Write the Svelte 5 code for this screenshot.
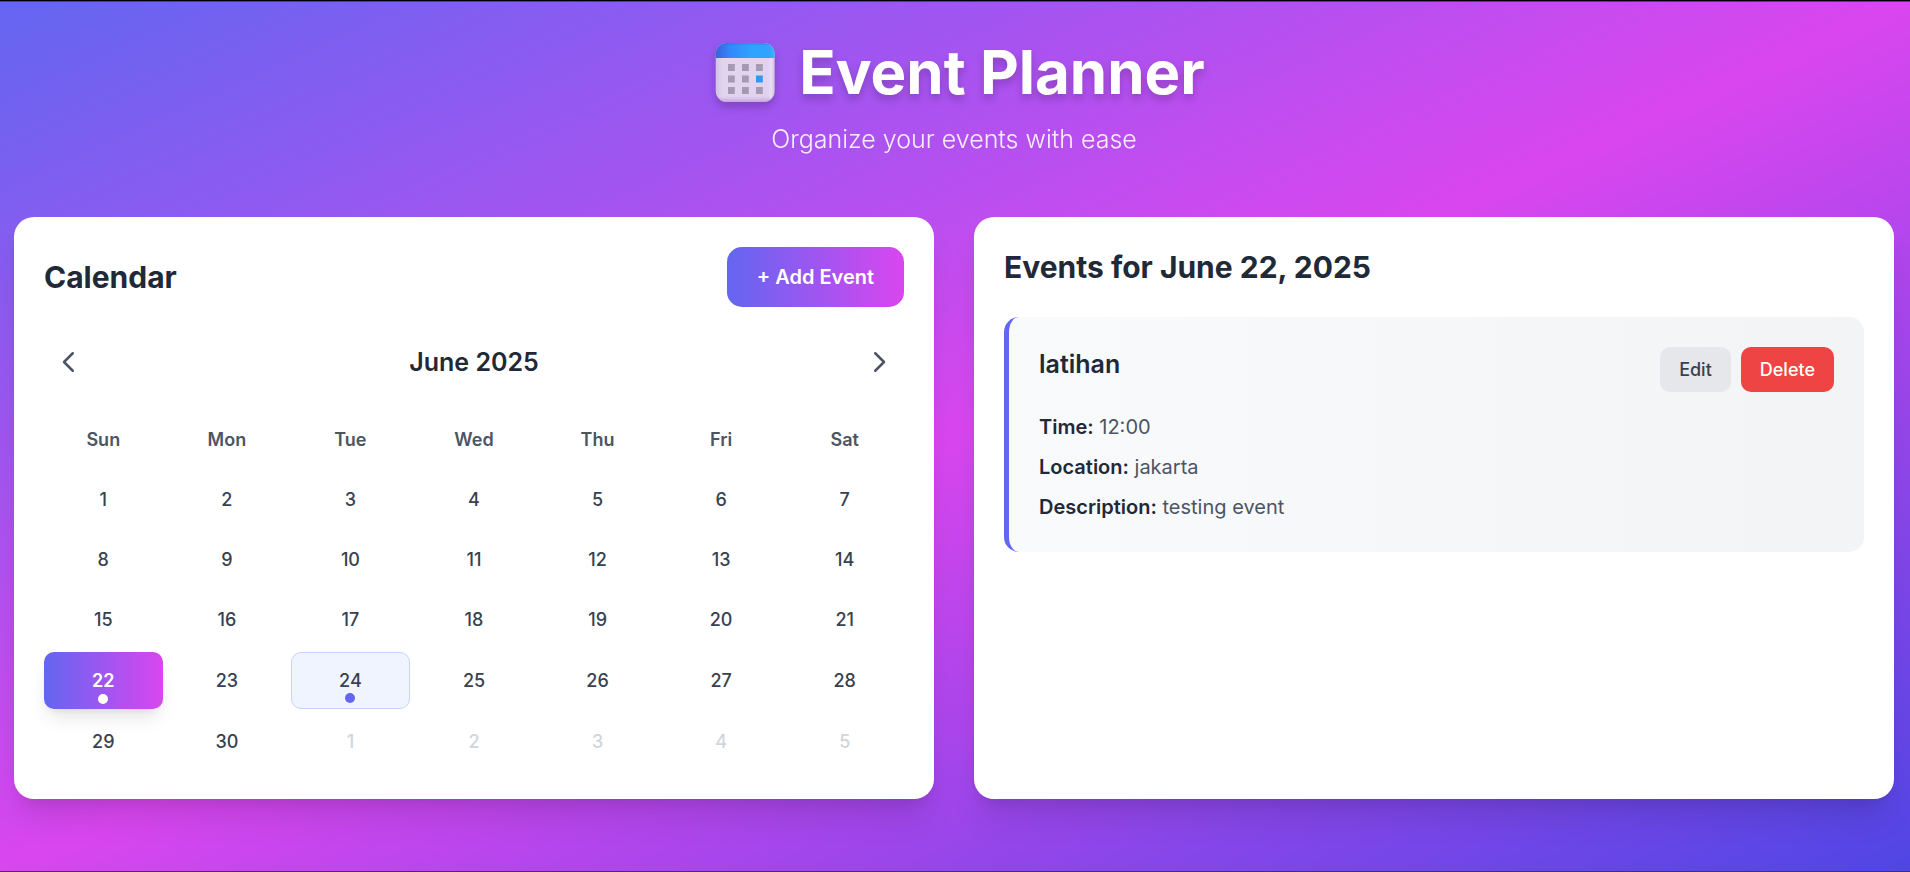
<script>
  const weekdays = ['Sun', 'Mon', 'Tue', 'Wed', 'Thu', 'Fri', 'Sat'];
  const monthDays = Array.from({ length: 30 }, (_, i) => ({ day: i + 1, key: `2025-06-${i + 1}`, outside: false }));
  const nextDays = Array.from({ length: 5 }, (_, i) => ({ day: i + 1, key: `2025-07-${i + 1}`, outside: true }));
  const days = [...monthDays, ...nextDays];

  const withEvents = ['2025-06-22', '2025-06-24'];
  let selected = $state('2025-06-22');

  const details = [
    ['Time:', '12:00'],
    ['Location:', 'jakarta'],
    ['Description:', 'testing event']
  ];
  const squares = [0, 1, 2].flatMap((r) => [0, 1, 2].map((c) => ({ r, c })));
</script>

<div class="page">
  <header class="hero">
    <h1>
      <svg class="logo" viewBox="0 0 60 60" aria-hidden="true">
        <defs>
          <linearGradient id="band" x1="0" y1="0" x2="1" y2="0">
            <stop offset="0" stop-color="#3a5fd6" />
            <stop offset="0.25" stop-color="#3387fb" />
            <stop offset="0.6" stop-color="#2fa2ff" />
            <stop offset="0.9" stop-color="#2fa4ff" />
            <stop offset="1" stop-color="#3fb4f4" />
          </linearGradient>
          <linearGradient id="sheet" x1="0" y1="0" x2="1" y2="0">
            <stop offset="0" stop-color="#cfc0dc" />
            <stop offset="0.12" stop-color="#e1d4ed" />
            <stop offset="0.88" stop-color="#e1d3ef" />
            <stop offset="0.94" stop-color="#e9dcf5" />
            <stop offset="1" stop-color="#c9bbd6" />
          </linearGradient>
          <linearGradient id="foot" x1="0" y1="0" x2="0" y2="1">
            <stop offset="0" stop-color="#c7a4e4" stop-opacity="0" />
            <stop offset="1" stop-color="#c08fe0" stop-opacity="0.75" />
          </linearGradient>
          <clipPath id="shape"><rect x="0.7" y="1" width="59" height="59" rx="11" /></clipPath>
        </defs>
        <g clip-path="url(#shape)">
          <rect width="60" height="60" fill="url(#sheet)" />
          <rect y="54" width="60" height="6" fill="url(#foot)" />
          <rect width="60" height="16" fill="url(#band)" />
          <rect width="60" height="3" fill="#2867d8" opacity="0.25" />
        </g>
        {#each squares as { r, c }}
          <rect
            x={13 + c * 14}
            y={22 + r * 11.5}
            width="6.8"
            height="7"
            fill={r === 1 && c === 2 ? '#2f98f2' : '#a59ab2'}
          />
        {/each}
      </svg>
      <span>Event Planner</span>
    </h1>
    <p>Organize your events with ease</p>
  </header>

  <main class="panels">
    <section class="panel">
      <div class="panel-head">
        <h2>Calendar</h2>
        <button class="add" type="button">+ Add Event</button>
      </div>

      <div class="month">
        <button type="button" class="step" aria-label="Previous month">
          <svg viewBox="0 0 24 24"><path d="M15 19l-7-7 7-7" /></svg>
        </button>
        <h3>June 2025</h3>
        <button type="button" class="step" aria-label="Next month">
          <svg viewBox="0 0 24 24"><path d="M9 5l7 7-7 7" /></svg>
        </button>
      </div>

      <div class="grid">
        {#each weekdays as name}
          <div class="weekday">{name}</div>
        {/each}
        {#each days as d (d.key)}
          <button
            type="button"
            class="day"
            class:outside={d.outside}
            class:marked={withEvents.includes(d.key)}
            class:selected={selected === d.key}
            onclick={() => (selected = d.key)}>{d.day}</button>
        {/each}
      </div>
    </section>

    <section class="panel">
      <h2>Events for June 22, 2025</h2>
      <article class="event">
        <div class="event-head">
          <h3>latihan</h3>
          <div class="actions">
            <button type="button" class="edit">Edit</button>
            <button type="button" class="delete">Delete</button>
          </div>
        </div>
        <div class="details">
          {#each details as [label, value]}
            <p><strong>{label}</strong> {value}</p>
          {/each}
        </div>
      </article>
    </section>
  </main>
</div>

<style>
  :global(body) {
    margin: 0;
  }

  .page {
    box-sizing: border-box;
    min-height: 100vh;
    padding: 41px 16px 72px 14px;
    border-top: 1px solid #000;
    border-bottom: 1px solid #3d3d3d;
    background: linear-gradient(to bottom right, #6366f1, #d946ef, #4f46e5);
    box-shadow: inset 0 1px #4b4a5c;
    color: #1f2937;
    font-family: Inter, 'Liberation Sans', sans-serif;
    font-size: 20px;
    line-height: 30px;
  }

  h1,
  h2,
  h3,
  p {
    margin: 0;
  }

  button {
    border: 0;
    font-family: inherit;
    cursor: pointer;
  }

  .hero {
    display: flex;
    flex-direction: column;
    gap: 20px;
    margin-bottom: 60px;
    color: #fff;
    text-align: center;
  }

  h1 {
    display: flex;
    justify-content: center;
    align-items: center;
    gap: 24px;
    padding-left: 12px;
    font-size: 60px;
    line-height: 60px;
    font-weight: 700;
    text-shadow: 0 5px 8px rgba(0, 0, 0, 0.2);
  }

  .logo {
    width: 60px;
    height: 60px;
    filter: drop-shadow(0 5px 4px rgba(0, 0, 0, 0.2));
  }

  .hero p {
    font-size: 25px;
    line-height: 35px;
    font-weight: 300;
    opacity: 0.9;
  }

  .panels {
    display: grid;
    grid-template-columns: 1fr 1fr;
    gap: 40px;
  }

  .panel {
    padding: 30px;
    border-radius: 20px;
    background: #fff;
    box-shadow:
      0 25px 31px -6px rgba(0, 0, 0, 0.1),
      0 10px 13px -8px rgba(0, 0, 0, 0.1);
  }

  h2 {
    font-size: 30px;
    line-height: 40px;
    font-weight: 700;
  }

  h3 {
    font-size: 25px;
    line-height: 35px;
    font-weight: 600;
  }

  .panel-head {
    display: flex;
    justify-content: space-between;
    align-items: center;
    margin-bottom: 30px;
  }

  .add {
    padding: 15px 30px;
    border-radius: 15px;
    background: linear-gradient(to right, #6366f1, #d946ef);
    color: #fff;
    font-size: 20px;
    line-height: 30px;
    font-weight: 600;
  }

  .month {
    display: flex;
    justify-content: space-between;
    align-items: center;
    margin-bottom: 25px;
  }

  .step {
    padding: 10px;
    border-radius: 10px;
    background: none;
    color: #4b5563;
  }

  .step svg {
    display: block;
    width: 30px;
    height: 30px;
    fill: none;
    stroke: currentColor;
    stroke-width: 2;
    stroke-linecap: round;
    stroke-linejoin: round;
  }

  .grid {
    display: grid;
    grid-template-columns: repeat(7, 1fr);
    gap: 5px;
    font-size: 18px;
    line-height: 25px;
    text-align: center;
  }

  .weekday {
    padding: 15px 0;
    color: #4b5563;
    font-weight: 600;
  }

  .day {
    position: relative;
    padding: 15px 0;
    border-radius: 10px;
    background: none;
    color: #374151;
    font-size: 18px;
    line-height: 25px;
    font-weight: 500;
  }

  .outside {
    color: #d1d5db;
  }

  .marked {
    border: 1px solid #c7d2fe;
    background: #f0f4ff;
  }

  .marked::after {
    content: '';
    position: absolute;
    bottom: 5px;
    left: 50%;
    width: 10px;
    height: 10px;
    margin-left: -5px;
    border-radius: 50%;
    background: #6366f1;
  }

  .selected {
    border: 0;
    background: linear-gradient(to right, #6366f1, #d946ef);
    box-shadow:
      0 12px 19px -4px rgba(0, 0, 0, 0.1),
      0 5px 8px -5px rgba(0, 0, 0, 0.1);
    color: #fff;
    font-weight: 600;
  }

  .selected::after {
    background: #fff;
  }

  .event {
    margin-top: 30px;
    padding: 30px;
    border-left: 5px solid #6366f1;
    border-radius: 15px;
    background: linear-gradient(to right, #f9fafb, #f3f4f6);
  }

  .event-head {
    display: flex;
    justify-content: space-between;
    align-items: flex-start;
    margin-bottom: 20px;
  }

  .actions {
    display: flex;
    gap: 10px;
  }

  .actions button {
    padding: 10px 19px;
    border-radius: 10px;
    font-size: 18px;
    line-height: 25px;
    font-weight: 500;
  }

  .actions .edit {
    background: #e5e7eb;
    color: #374151;
  }

  .actions .delete {
    background: #ef4444;
    color: #fff;
  }

  .details {
    display: flex;
    flex-direction: column;
    gap: 10px;
    color: #4b5563;
  }

  .details strong {
    color: #1f2937;
    font-weight: 600;
  }
</style>
